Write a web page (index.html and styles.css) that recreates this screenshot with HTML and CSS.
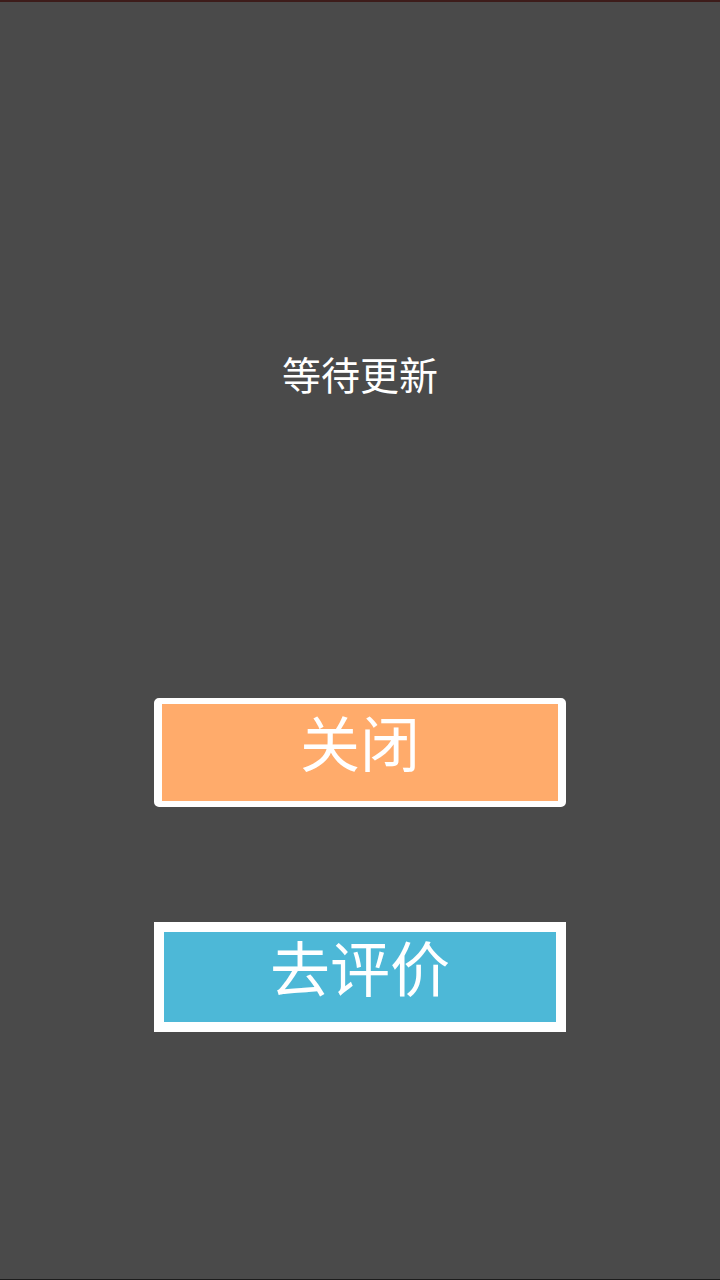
FILE: index.html
```html
<!DOCTYPE html>
<html lang="zh-CN">
<head>
    <meta charset="UTF-8">
    <meta name="viewport" content="width=device-width, initial-scale=1.0">
    <title>等待更新</title>
    <link rel="stylesheet" href="styles.css">
</head>
<body>

<div class="top-line"></div>

<div class="screen">
    <div class="status">等待更新</div>

    <a href="#" class="btn btn-close">关闭</a>
    <a href="#" class="btn btn-rate">去评价</a>
</div>

<div class="bottom-line"></div>

</body>
</html>
```

FILE: styles.css
```css
html, body {
    margin: 0;
    padding: 0;
}

body {
    font-family: 'Noto Sans CJK SC', 'Noto Sans', sans-serif;
    background-color: #4a4a4a;
    color: #fff;
    width: 720px;
    height: 1280px;
    display: flex;
    flex-direction: column;
    overflow: hidden;
}

.top-line {
    height: 2px;
    background-color: #3d1c1a;
}

.screen {
    flex: 1;
    display: flex;
    flex-direction: column;
    align-items: center;
}

.status {
    margin-top: 347px;
    font-size: 39px;
    line-height: 48px;
    text-align: center;
}

.btn {
    display: block;
    box-sizing: border-box;
    width: 412px;
    color: #fff;
    text-align: center;
    text-decoration: none;
    font-size: 60px;
    line-height: 60px;
}

.btn-close {
    margin-top: 301px;
    height: 109px;
    padding-top: 7px;
    background-color: #ffab6b;
    border: solid #fff;
    border-width: 6px 8px;
    border-radius: 5px;
}

.btn-rate {
    margin-top: 115px;
    height: 110px;
    padding-top: 4px;
    background-color: #4db8d7;
    border: 10px solid #fff;
}

.bottom-line {
    height: 1px;
    background-color: #1c1c1c;
}
```
